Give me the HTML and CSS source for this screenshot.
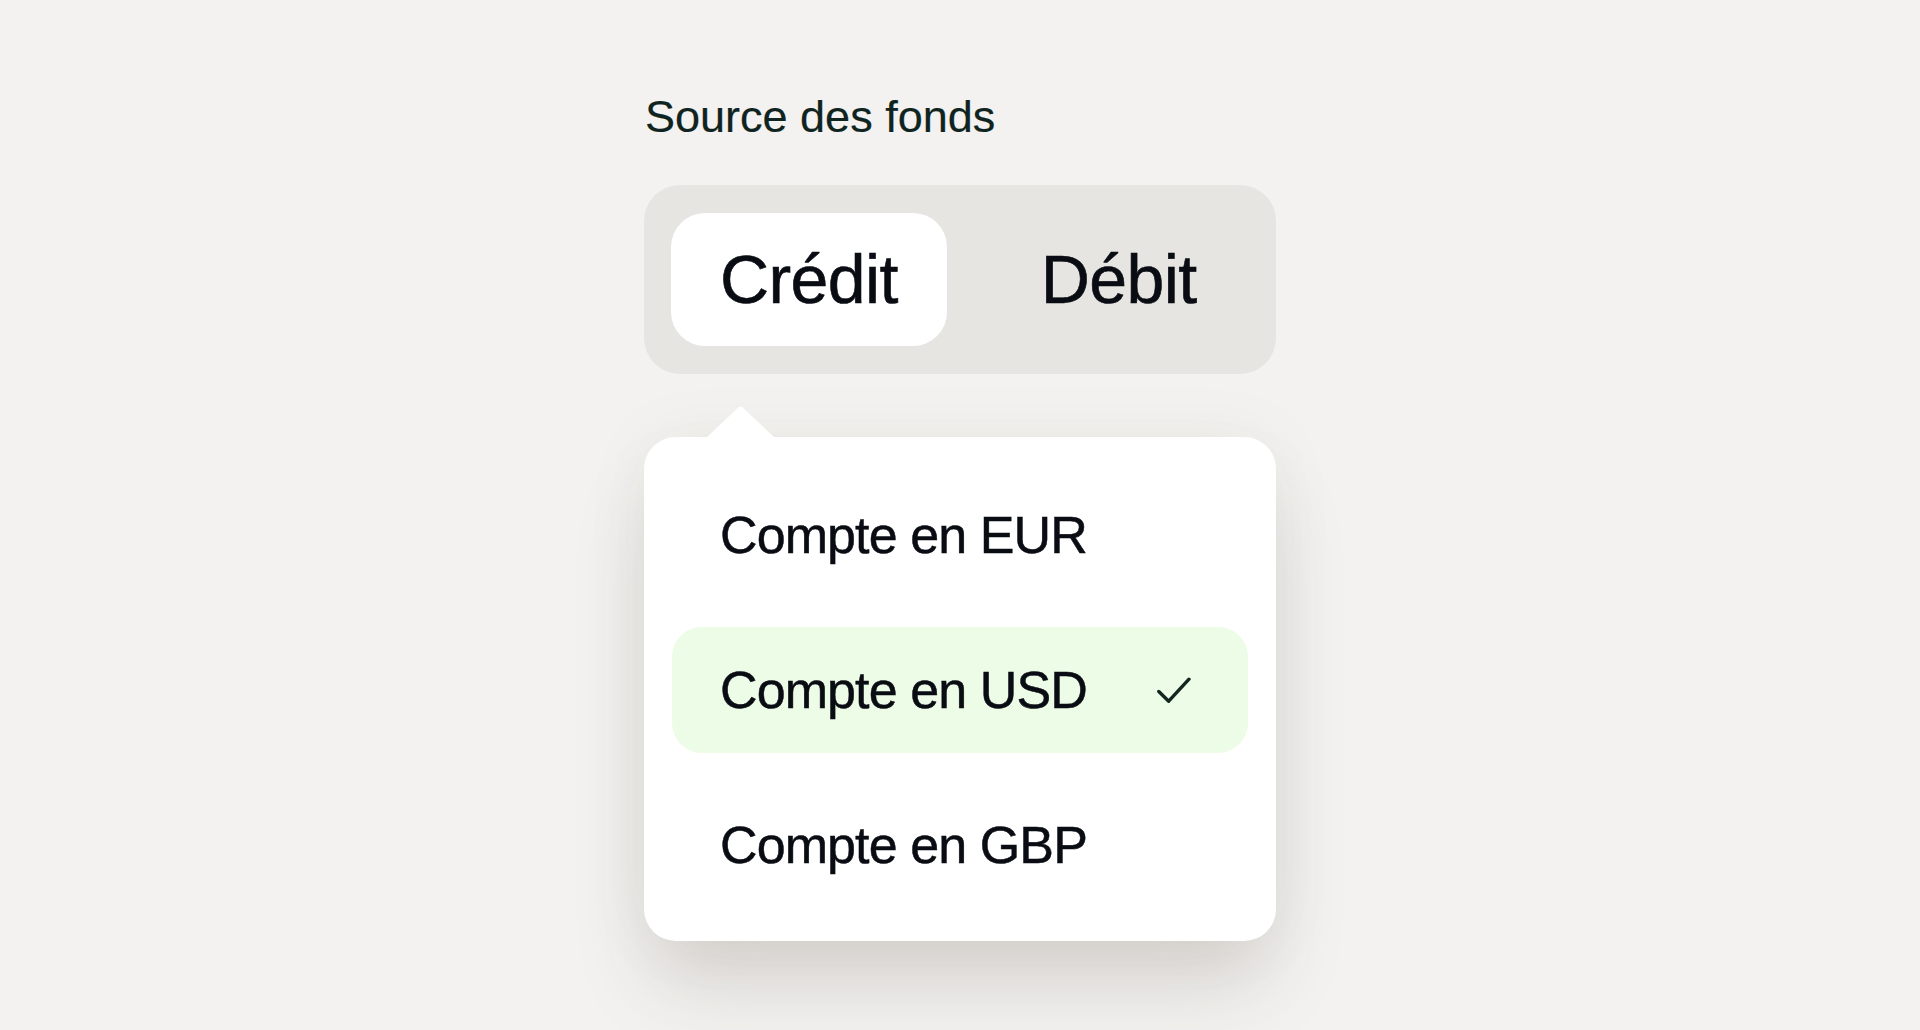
FILE: index.html
```html
<!DOCTYPE html>
<html lang="fr">
<head>
<meta charset="utf-8">
<title>Source des fonds</title>
<link rel="stylesheet" href="styles.css">
</head>
<body>
<main class="page">
  <div class="panel">
    <div class="label">Source des fonds</div>
    <div class="segmented">
      <div class="seg seg-active">Crédit</div>
      <div class="seg">Débit</div>
    </div>
    <div class="dropdown">
      <svg class="caret" width="69" height="32" viewBox="0 0 69 32" aria-hidden="true">
        <path d="M0 32 L31.5 2.2 Q34.5 -0.6 37.5 2.2 L69 32 Z" fill="#ffffff"/>
      </svg>
      <ul class="options">
        <li class="option">Compte en EUR</li>
        <li class="option option-selected">
          <span>Compte en USD</span>
          <svg class="check" width="34" height="28" viewBox="0 0 34 28" aria-hidden="true">
            <path d="M1.8 15.5 L11.7 25.2 L32 3.2" fill="none" stroke="#13261f" stroke-width="3.4" stroke-linecap="round" stroke-linejoin="round"/>
          </svg>
        </li>
        <li class="option">Compte en GBP</li>
      </ul>
    </div>
  </div>
</main>
</body>
</html>
```

FILE: styles.css
```css
html, body {
  margin: 0;
  padding: 0;
}

body {
  background: #f3f2f0;
  font-family: "Liberation Sans", Arial, sans-serif;
  color: #0a0c13;
  height: 1030px;
  overflow: hidden;
}

.page {
  display: flex;
  justify-content: center;
  padding-top: 90px;
}

.panel {
  width: 632px;
  display: flex;
  flex-direction: column;
}

.label {
  font-size: 45px;
  line-height: 54px;
  color: #0f2420;
  padding-left: 1px;
  -webkit-text-stroke: 0.2px #0f2420;
}

.segmented {
  margin-top: 41px;
  background: #e6e5e1;
  border-radius: 36px;
  padding: 28px 27px;
  display: flex;
  gap: 45px;
}

.seg {
  height: 133px;
  line-height: 133px;
  padding: 0 49px;
  font-size: 68px;
  letter-spacing: -0.6px;
  border-radius: 34px;
  color: #0a0c13;
  -webkit-text-stroke: 0.6px #0a0c13;
}

.seg-active {
  background: #ffffff;
}

.dropdown {
  position: relative;
  margin-top: 63px;
  background: #ffffff;
  border-radius: 32px;
  box-shadow: 0 50px 80px -10px rgba(70, 52, 40, 0.17), 0 0 70px rgba(60, 50, 40, 0.05);
}

.caret {
  position: absolute;
  top: -31px;
  left: 62px;
  display: block;
}

.options {
  list-style: none;
  margin: 0;
  padding: 35px 28px 33px;
  display: flex;
  flex-direction: column;
  gap: 29px;
}

.option {
  height: 126px;
  line-height: 128px;
  padding: 0 57px 0 48px;
  font-size: 52px;
  letter-spacing: -0.9px;
  border-radius: 30px;
  display: flex;
  align-items: center;
  justify-content: space-between;
  -webkit-text-stroke: 0.5px #0a0c13;
}

.option-selected {
  background: #edfce7;
}

.check {
  display: block;
}
```
